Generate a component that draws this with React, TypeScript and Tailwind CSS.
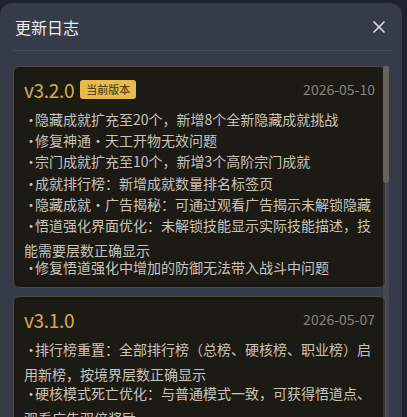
import { X } from "lucide-react";

type Item = { text: string; wrap?: boolean };

const logs: { version: string; date: string; current?: boolean; items: Item[] }[] = [
  {
    version: "v3.2.0",
    date: "2026-05-10",
    current: true,
    items: [
      { text: "隐藏成就扩充至20个，新增8个全新隐藏成就挑战" },
      { text: "修复神通·天工开物无效问题" },
      { text: "宗门成就扩充至10个，新增3个高阶宗门成就" },
      { text: "成就排行榜：新增成就数量排名标签页" },
      { text: "隐藏成就·广告揭秘：可通过观看广告揭示未解锁隐藏" },
      { text: "悟道强化界面优化：未解锁技能显示实际技能描述，技能需要层数正确显示", wrap: true },
      { text: "修复悟道强化中增加的防御无法带入战斗中问题" },
    ],
  },
  {
    version: "v3.1.0",
    date: "2026-05-07",
    items: [
      { text: "排行榜重置：全部排行榜（总榜、硬核榜、职业榜）启用新榜，按境界层数正确显示", wrap: true },
      { text: "硬核模式死亡优化：与普通模式一致，可获得悟道点、观看广告双倍奖励", wrap: true },
    ],
  },
];

export default function App() {
  return (
    <div
      className="w-[407px] h-[417px] overflow-hidden bg-[#1d2130] pt-[3px]"
      style={{ fontFamily: '"Noto Sans CJK SC", "Noto Sans", sans-serif' }}
    >
      {/* MODAL */}
      <div className="w-[402px] h-[430px] bg-[#363b4a] rounded-[12px] flex flex-col">

        {/* HEADER */}
        <div className="h-[47px] flex items-center justify-between pl-[15px] pr-[13px]">
          <h2 className="text-[16px] text-[#ebebef] leading-none">更新日志</h2>
          <X size={20} strokeWidth={2.1} className="text-[#d8d9de]" />
        </div>
        <div className="h-px bg-[#454b5a] ml-[13px] mr-[10px]" />

        {/* LIST */}
        <div className="relative flex-1 overflow-hidden pt-[15px] pl-[13px] pr-[16px]">
          <div className="flex flex-col gap-[8px]">
            {logs.map((log) => (
              <div
                key={log.version}
                className="bg-[#1c1a15] border border-[#4f4a3c] rounded-[6px] pt-[6px] pb-[9px] px-[10px]"
              >
                <div className="h-[32px] flex items-center">
                  <span className="text-[19px] tracking-[-0.3px] text-[#d8ad46] leading-none">{log.version}</span>
                  {log.current && (
                    <span className="ml-[6px] bg-[#e8b94c] text-[#3b2d10] text-[11px] leading-[19px] px-[6px] rounded-[3px]">
                      当前版本
                    </span>
                  )}
                  <span className="ml-auto text-[14px] text-[#87837b] leading-none">{log.date}</span>
                </div>
                <div className="mt-[4px] text-[14px] text-[#c9c4ba]">
                  {log.items.map((item, i) => (
                    <div
                      key={i}
                      className={item.wrap ? "leading-[25px] mt-[-2px] mb-[-6px]" : "leading-[21.2px]"}
                    >
                      <span className="inline-block w-[11px]">·</span>
                      {item.text}
                    </div>
                  ))}
                </div>
              </div>
            ))}
          </div>

          {/* SCROLLBAR */}
          <div className="absolute right-[13px] top-[15px] bottom-0 w-[6px] bg-[#5a5d66]/40" />
          <div className="absolute right-[13px] top-[15px] h-[117px] w-[6px] rounded-[3px] bg-[#67645d]" />
        </div>
      </div>
    </div>
  );
}
